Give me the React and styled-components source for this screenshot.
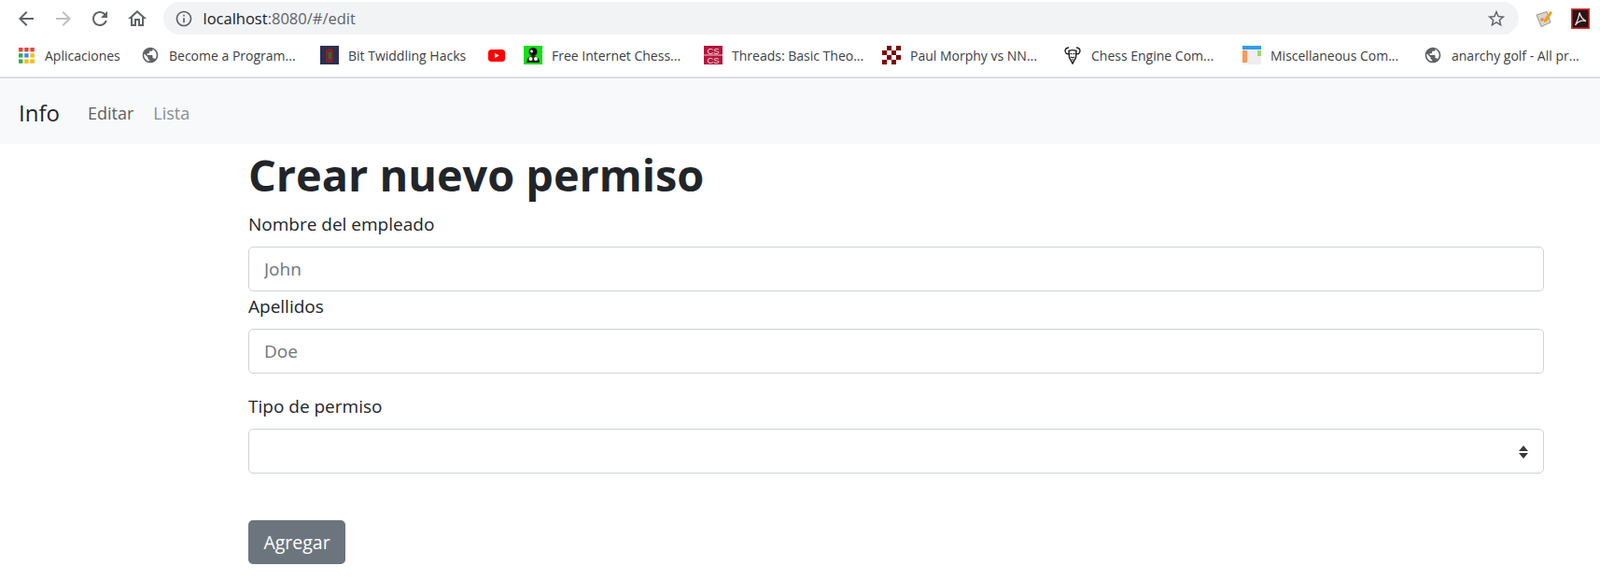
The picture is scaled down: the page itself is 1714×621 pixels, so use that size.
import styled, { createGlobalStyle } from "styled-components";

const GlobalStyle = createGlobalStyle`
  html, body {
    margin: 0;
    padding: 0;
    background: #fff;
  }
  * {
    box-sizing: border-box;
  }
`;

const paths = {
  back: "M20 11H7.83l5.59-5.59L12 4l-8 8 8 8 1.41-1.41L7.83 13H20v-2z",
  forward: "M12 4l-1.41 1.41L16.17 11H4v2h12.17l-5.58 5.59L12 20l8-8z",
  reload:
    "M17.65 6.35C16.2 4.9 14.21 4 12 4c-4.42 0-7.99 3.58-7.99 8s3.57 8 7.99 8c3.73 0 6.84-2.55 7.73-6h-2.08c-.82 2.33-3.04 4-5.65 4-3.31 0-6-2.69-6-6s2.69-6 6-6c1.66 0 3.14.69 4.22 1.78L13 11h7V4l-2.35 2.35z",
  home: "M12 5.69l5 4.5V18h-2v-6H9v6H7v-7.81l5-4.5M12 3L2 12h3v8h6v-6h2v6h6v-8h3L12 3z",
  info: "M11 7h2v2h-2zm0 4h2v6h-2zm1-9C6.48 2 2 6.48 2 12s4.48 10 10 10 10-4.48 10-10S17.52 2 12 2zm0 18c-4.41 0-8-3.59-8-8s3.59-8 8-8 8 3.59 8 8-3.59 8-8 8z",
  star: "M22 9.24l-7.19-.62L12 2 9.19 8.63 2 9.24l5.46 4.73L5.82 21 12 17.27 18.18 21l-1.63-7.03L22 9.24zM12 15.4l-3.76 2.27 1-4.28-3.32-2.88 4.38-.38L12 6.1l1.71 4.04 4.38.38-3.32 2.88 1 4.28L12 15.4z",
  globe:
    "M12 2C6.48 2 2 6.48 2 12s4.48 10 10 10 10-4.48 10-10S17.52 2 12 2zm-1 17.93c-3.95-.49-7-3.85-7-7.93 0-.62.08-1.21.21-1.79L9 15v1c0 1.1.9 2 2 2v1.93zm6.9-2.54c-.26-.81-1-1.39-1.9-1.39h-1v-3c0-.55-.45-1-1-1H8v-2h2c.55 0 1-.45 1-1V7h2c1.1 0 2-.9 2-2v-.41c2.93 1.19 5 4.06 5 7.41 0 2.08-.8 3.97-2.1 5.39z",
};

const Icon = ({ name, size = 24, color = "#5f6368" }) => (
  <svg width={size} height={size} viewBox="0 0 24 24" fill={color}>
    <path d={paths[name]} />
  </svg>
);

const AppsIcon = () => (
  <svg width="17" height="17" viewBox="0 0 17 17">
    {[
      ["#ea4335", "#ea4335", "#ea4335"],
      ["#34a853", "#4285f4", "#fbbc05"],
      ["#34a853", "#fbbc05", "#fbbc05"],
    ].map((row, y) =>
      row.map((fill, x) => (
        <rect key={`${x}${y}`} x={x * 6.2} y={y * 6.2} width="4.4" height="4.4" fill={fill} />
      ))
    )}
  </svg>
);

const BitIcon = () => (
  <svg width="20" height="20" viewBox="0 0 20 20">
    <rect width="20" height="20" fill="#2d2f52" />
    <rect x="6" y="3" width="8" height="15" rx="3.5" fill="#7a2626" />
    <rect x="9" y="7" width="3" height="7" fill="#2d6b3a" />
  </svg>
);

const YoutubeIcon = () => (
  <svg width="18" height="13" viewBox="0 0 18 13">
    <rect width="18" height="13" rx="3.5" fill="#f00" />
    <path d="M7 3.8v5.4l4.6-2.7z" fill="#fff" />
  </svg>
);

const ChessIcon = () => (
  <svg width="20" height="20" viewBox="0 0 20 20">
    <rect width="20" height="20" fill="#12e012" />
    <circle cx="10" cy="6.5" r="4.5" fill="#111" />
    <circle cx="8.5" cy="6" r="1.4" fill="#fff" />
    <path d="M3 18c0-5 3-7 7-7s7 2 7 7z" fill="#222" />
    <circle cx="7.5" cy="14" r="2" fill="#fff" />
    <circle cx="13" cy="14" r="2" fill="#fff" />
  </svg>
);

const CsIcon = () => (
  <svg width="20" height="20" viewBox="0 0 20 20">
    <rect width="20" height="20" fill="#b3163f" />
    <rect y="9.4" width="20" height="1.2" fill="#e6a9b8" />
    <text x="10" y="8.5" fontSize="9.5" textAnchor="middle" fill="#f3d5dc" fontFamily="Liberation Sans, sans-serif">CS</text>
    <text x="10" y="18.5" fontSize="9.5" textAnchor="middle" fill="#f3d5dc" fontFamily="Liberation Sans, sans-serif">CS</text>
  </svg>
);

const CheckerIcon = () => (
  <svg width="20" height="20" viewBox="0 0 20 20">
    <path
      d="M5 0h5v5H5zM15 0h5v5h-5zM0 5h5v5H0zM10 5h5v5h-5zM5 10h5v5H5zM15 10h5v5h-5zM0 15h5v5H0zM10 15h5v5h-5z"
      fill="#7d0000"
    />
  </svg>
);

const GnuIcon = () => (
  <svg width="20" height="20" viewBox="0 0 20 20" fill="none" stroke="#222" strokeWidth="1.5">
    <path d="M6 2C2 2 1 6 3 8c1 1 2 1 3.5 0.5M14 2c4 0 5 4 3 6-1 1-2 1-3.5 0.5" />
    <path d="M6 5.5c2-1 6-1 8 0l-0.5 7-3.5 6.5-3.5-6.500z" fill="#fff" />
    <path d="M7.5 8l2 1M12.5 8l-2 1M8 12c1.3 0.8 2.7 0.8 4 0M9 15h2" strokeWidth="1.1" />
  </svg>
);

const MiscIcon = () => (
  <svg width="20" height="20" viewBox="0 0 20 20">
    <rect width="20" height="20" fill="#eeeeee" />
    <rect width="20" height="4" fill="#2c9fe8" />
    <rect y="5" width="5" height="13" fill="#f79a5b" />
    <rect x="16" y="5" width="4" height="6" fill="#a3d66c" />
  </svg>
);

const NotesIcon = () => (
  <svg width="20" height="20" viewBox="0 0 20 20">
    <path d="M1 6l11-3.5 4 11.5-10 4.5z" fill="#d9d5cc" stroke="#9a968c" />
    <path d="M5 10l3-1 1 3-3 1z" fill="#e58a5a" />
    <path d="M9 11l6.5-9 2.5 1.5-6 9.5-3 1z" fill="#eda21f" />
  </svg>
);

const PdfIcon = () => (
  <svg width="20" height="22" viewBox="0 0 20 22">
    <rect x="0.75" y="0.75" width="18.5" height="20.5" fill="#2a1516" stroke="#e8302a" strokeWidth="1.5" />
    <path
      d="M9 4.5c1 3.5 2.5 7 7 9-3.5-0.8-8-0.5-11.5 4.5C6.5 14 8.5 9 9 4.5z"
      fill="none"
      stroke="#e9dede"
      strokeWidth="1.3"
    />
  </svg>
);

const Toolbar = styled.div`
  height: 38px;
  display: flex;
  align-items: center;
  padding: 1px 0 0 16px;
  background: #fff;
`;

const NavIcon = styled.div`
  width: 24px;
  height: 24px;
  margin-right: 15.5px;
  flex: none;
  &:nth-child(4) {
    margin-right: 0;
  }
`;

const Omnibox = styled.div`
  flex: 1;
  height: 35px;
  margin: 0 18px 0 16px;
  padding: 0 13px 0 12px;
  border-radius: 18px;
  background: #f1f3f4;
  display: flex;
  align-items: center;
  gap: 11px;
`;

const Url = styled.div`
  flex: 1;
  font: 16.5px "Open Sans", sans-serif;
  color: #5f6368;
  strong {
    font-weight: 400;
    color: #202124;
  }
`;

const Extensions = styled.div`
  width: 58px;
  margin-right: 11px;
  display: flex;
  align-items: center;
  justify-content: space-between;
`;

const BookmarkBar = styled.div`
  height: 46px;
  display: flex;
  align-items: center;
  padding: 0 0 2px 18px;
  background: #fff;
  border-bottom: 2px solid #dadce0;
`;

const Bookmark = styled.div`
  width: ${(p) => p.$width}px;
  flex: none;
  display: flex;
  align-items: center;
  gap: 10px;
  font: 14px "Open Sans", sans-serif;
  color: #3c4043;
  white-space: nowrap;
`;

const FaviconSlot = styled.div`
  width: 20px;
  height: 22px;
  flex: none;
  display: flex;
  align-items: center;
  justify-content: center;
`;

const Navbar = styled.nav`
  height: 70px;
  background: #f8f9fa;
  display: flex;
  align-items: center;
  padding: 3px 20px 0;
`;

const Brand = styled.div`
  font: 24px "Open Sans", sans-serif;
  color: #212529;
  margin-right: 30px;
`;

const NavLink = styled.div`
  font: 18px "Open Sans", sans-serif;
  color: ${(p) => (p.$muted ? "#8a8d90" : "#5a5f64")};
  margin-right: 21px;
`;

const Container = styled.main`
  padding: 0 60px 0 266px;
  font-family: "Open Sans", sans-serif;
  color: #212529;
`;

const Title = styled.h1`
  margin: 4px 0 0;
  font-size: 46.8px;
  font-weight: 700;
  line-height: 58px;
`;

const Label = styled.label`
  display: block;
  font-size: 19px;
  line-height: 27px;
  margin-top: ${(p) => p.$top}px;
  margin-bottom: 10px;
`;

const Input = styled.input`
  display: block;
  width: 100%;
  height: 48px;
  padding: 0 16px;
  font: 19px "Open Sans", sans-serif;
  border: 1px solid #ced4da;
  border-radius: 5px;
  background: #fff;
  &::placeholder {
    color: #6c757d;
    opacity: 1;
  }
`;

const SelectBox = styled.div`
  position: relative;
  height: 48px;
  border: 1px solid #ced4da;
  border-radius: 5px;
  background: #fff;
`;

const SelectCaret = styled.svg`
  position: absolute;
  right: 15px;
  top: 16px;
`;

const SubmitButton = styled.button`
  display: block;
  margin-top: 50px;
  width: 104px;
  height: 47px;
  padding: 0;
  font: 19.5px "Open Sans", sans-serif;
  color: #fff;
  background: #6c757d;
  border: 0;
  border-radius: 5px;
`;

const bookmarks = [
  { icon: <AppsIcon />, text: "Aplicaciones", width: 133 },
  { icon: <Icon name="globe" size={22} />, text: "Become a Program...", width: 192 },
  { icon: <BitIcon />, text: "Bit Twiddling Hacks", width: 179 },
  { icon: <YoutubeIcon />, width: 39 },
  { icon: <ChessIcon />, text: "Free Internet Chess...", width: 193 },
  { icon: <CsIcon />, text: "Threads: Basic Theo...", width: 191 },
  { icon: <CheckerIcon />, text: "Paul Morphy vs NN...", width: 194 },
  { icon: <GnuIcon />, text: "Chess Engine Com...", width: 192 },
  { icon: <MiscIcon />, text: "Miscellaneous Com...", width: 194 },
  { icon: <Icon name="globe" size={22} />, text: "anarchy golf - All pr...", width: 170 },
];

const App = () => {
  return (
    <>
      <GlobalStyle />
      <Toolbar>
        <NavIcon><Icon name="back" /></NavIcon>
        <NavIcon><Icon name="forward" color="#bdc1c6" /></NavIcon>
        <NavIcon><Icon name="reload" /></NavIcon>
        <NavIcon><Icon name="home" /></NavIcon>
        <Omnibox>
          <Icon name="info" size={20} />
          <Url><strong>localhost</strong>:8080/#/edit</Url>
          <Icon name="star" size={22} />
        </Omnibox>
        <Extensions>
          <NotesIcon />
          <PdfIcon />
        </Extensions>
      </Toolbar>
      <BookmarkBar>
        {bookmarks.map((b, i) => (
          <Bookmark key={i} $width={b.width}>
            <FaviconSlot>{b.icon}</FaviconSlot>
            {b.text && <span>{b.text}</span>}
          </Bookmark>
        ))}
      </BookmarkBar>
      <Navbar>
        <Brand>Info</Brand>
        <NavLink>Editar</NavLink>
        <NavLink $muted>Lista</NavLink>
      </Navbar>
      <Container>
        <Title>Crear nuevo permiso</Title>
        <Label $top={11}>Nombre del empleado</Label>
        <Input placeholder="John" readOnly />
        <Label $top={3}>Apellidos</Label>
        <Input placeholder="Doe" readOnly />
        <Label $top={22}>Tipo de permiso</Label>
        <SelectBox>
          <SelectCaret width="12" height="16" viewBox="0 0 12 16">
            <path d="M6 1l5 6H1zM6 15l5-6H1z" fill="#343a40" />
          </SelectCaret>
        </SelectBox>
        <SubmitButton>Agregar</SubmitButton>
      </Container>
    </>
  );
};

export default App;
